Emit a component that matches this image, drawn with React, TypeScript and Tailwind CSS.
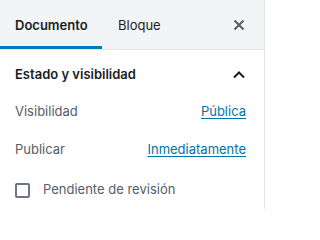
import React from "react";

export default function App() {
  return (
    <div className="w-[265px] h-[209px] bg-white border-r border-[#e2e4e7] overflow-hidden text-[13px] [font-family:Inter,'Noto_Sans',sans-serif]">
      <div className="h-[50px] bg-[#f3f4f5] border-b border-[#e2e4e7] flex items-stretch">
        <div className="w-[102px] pl-[15px] pt-[3px] flex items-center font-semibold text-[#191e23] shadow-[inset_0_-3px_0_#007cba]">
          Documento
        </div>
        <div className="pl-[16px] pt-[3px] flex items-center text-[#191e23]">Bloque</div>
        <div className="ml-auto mr-[19px] pt-[1px] flex items-center">
          <svg width="12" height="12" viewBox="0 0 12 12" fill="none">
            <path d="M1.5 1.5L10.5 10.5M10.5 1.5L1.5 10.5" stroke="#555d66" strokeWidth="2" />
          </svg>
        </div>
      </div>
      <div className="h-[47px] pt-[2px] flex items-center pl-[15px] pr-[19px]">
        <span className="font-semibold text-[#191e23]">Estado y visibilidad</span>
        <svg className="ml-auto" width="12" height="8" viewBox="0 0 12 8" fill="none">
          <path d="M1 6.5L6 1.5L11 6.5" stroke="#191e23" strokeWidth="2" />
        </svg>
      </div>
      <div className="mt-[1px] h-[28px] flex items-center justify-between pl-[15px] pr-[18px]">
        <span className="text-[#555d66]">Visibilidad</span>
        <span className="text-[#0073aa] underline underline-offset-2">Pública</span>
      </div>
      <div className="mt-[10px] h-[28px] flex items-center justify-between pl-[15px] pr-[18px]">
        <span className="text-[#555d66]">Publicar</span>
        <span className="text-[#0073aa] underline underline-offset-2">Inmediatamente</span>
      </div>
      <div className="mt-[12px] h-[28px] flex items-center pl-[15px]">
        <span className="w-[15px] h-[15px] border-2 border-[#6c7781] rounded-[2px]" />
        <span className="ml-[13px] text-[#555d66]">Pendiente de revisión</span>
      </div>
    </div>
  );
}
